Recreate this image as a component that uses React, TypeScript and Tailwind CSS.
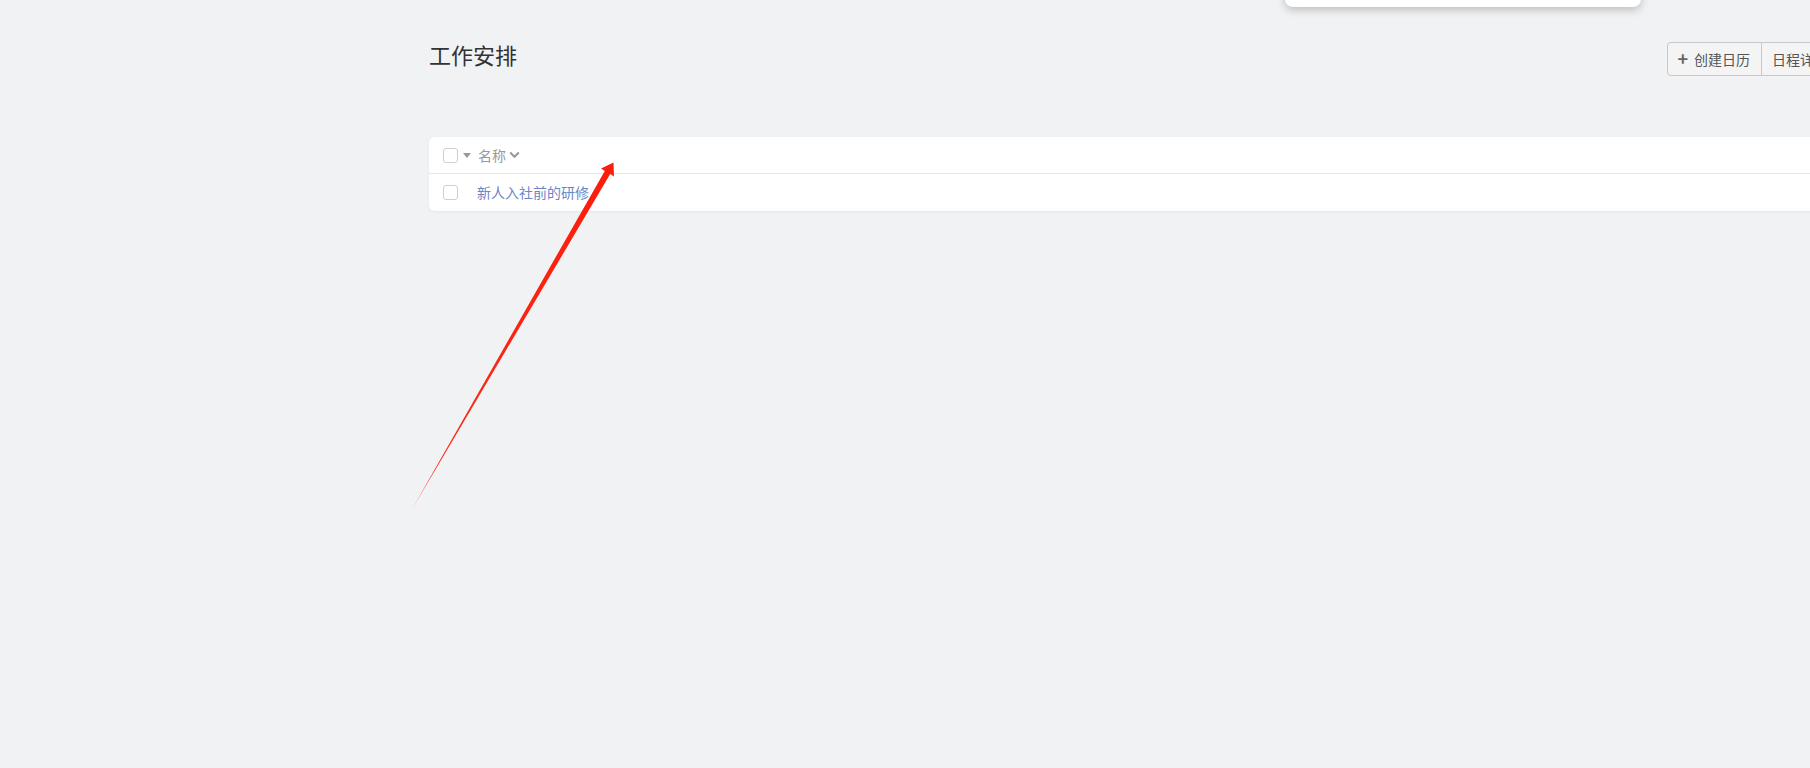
import React from "react";

const font = { fontFamily: '"Noto Sans CJK SC", "Noto Sans", sans-serif' };

function Checkbox() {
  return <div className="w-[15px] h-[15px] rounded-[3px] border border-[#cfcfcf] bg-white shrink-0" />;
}

export default function App() {
  return (
    <div className="relative w-[1810px] h-[768px] overflow-hidden bg-[#f1f2f4]" style={font}>
      {/* dropdown overlay at top */}
      <div className="absolute left-[1285px] top-[-20px] w-[356px] h-[27px] bg-white rounded-b-[8px] shadow-[0_3px_8px_rgba(0,0,0,0.22)]" />

      <div className="ml-[429px] w-[1410px] pt-[40px]">
        <div className="flex items-start justify-between h-[36px]">
          <h1 className="text-[22px] leading-[28px] text-[#333] font-normal">工作安排</h1>
          <div className="flex mt-[2px] h-[34px] border border-[#c6c8cc] rounded-[4px] bg-[#f4f4f5] text-[14px] text-[#555]">
            <div className="flex items-center pl-[9px] pr-[11px] border-r border-[#c6c8cc]">
              <span className="text-[#666] text-[18px] font-bold leading-none mr-[6px] -mt-[2px]">+</span>
              <span>创建日历</span>
            </div>
            <div className="flex items-center pl-[10px] pr-[10px]">
              <span>日程详情</span>
            </div>
          </div>
        </div>

        <div className="mt-[61px] bg-white rounded-[6px] shadow-[0_1px_3px_rgba(0,0,0,0.05)]">
          <div className="flex items-center h-[37px] pl-[14px] border-b border-[#e6e7e9] text-[14px] text-[#999]">
            <Checkbox />
            <svg width="8" height="5" viewBox="0 0 8 5" className="ml-[5px]">
              <path d="M0 0 L8 0 L4 5 Z" fill="#999" />
            </svg>
            <span className="ml-[7px]">名称</span>
            <svg width="11" height="8" viewBox="0 0 11 8" className="ml-[3px]">
              <path d="M1.2 1.5 L5.5 5.8 L9.8 1.5" stroke="#999" strokeWidth="2" fill="none" />
            </svg>
          </div>
          <div className="flex items-center h-[37px] pl-[14px] text-[14px]">
            <Checkbox />
            <span className="ml-[19px] text-[#6b86c6]">新人入社前的研修</span>
          </div>
        </div>
      </div>

      {/* red annotation arrow */}
      <svg className="absolute left-0 top-0 pointer-events-none" width="1810" height="768">
        <defs>
          <linearGradient id="ag" x1="411" y1="511" x2="613" y2="163" gradientUnits="userSpaceOnUse">
            <stop offset="0" stopColor="#ff7a6c" />
            <stop offset="0.12" stopColor="#fb2a17" />
            <stop offset="1" stopColor="#fb1d0c" />
          </linearGradient>
        </defs>
        <polygon
          points="411,511 610.2,174.1 614,176.6 613.5,162.5 601,168.6 604.8,170.9"
          fill="url(#ag)"
        />
      </svg>
    </div>
  );
}
